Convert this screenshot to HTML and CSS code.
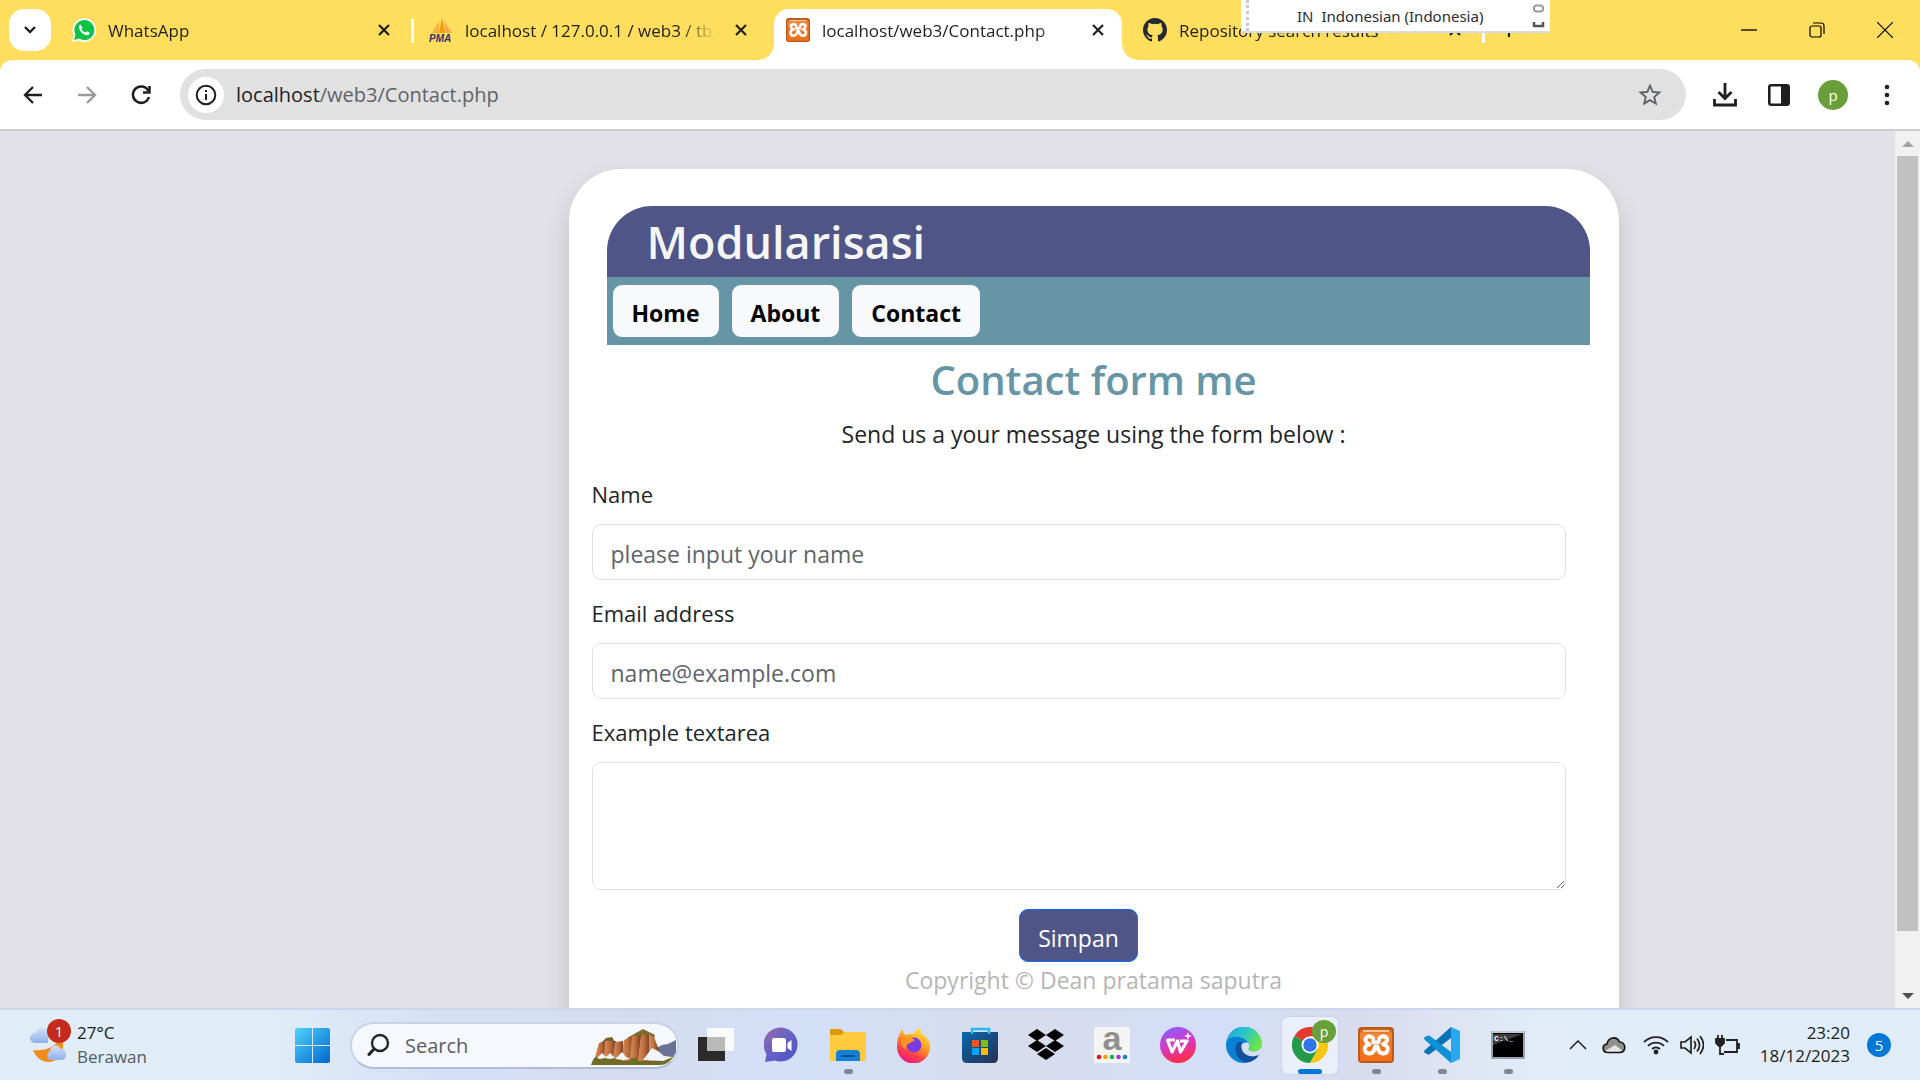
FILE: index.html
```html
<!DOCTYPE html>
<html lang="en">
<head>
<meta charset="utf-8">
<title>localhost/web3/Contact.php</title>
<link rel="stylesheet" href="styles.css">
</head>
<body>
<svg class="defs" aria-hidden="true">
  <symbol id="close" viewBox="0 0 14 14"><path d="M2 2l10 10M12 2L2 12" stroke="#1f1f1f" stroke-width="2.2"/></symbol>
  <linearGradient id="xg" x1="0" y1="0" x2="0" y2="1"><stop offset="0" stop-color="#c25a14"/><stop offset=".2" stop-color="#f58a3a"/><stop offset=".4" stop-color="#f37321"/><stop offset="1" stop-color="#f0701c"/></linearGradient>
  <symbol id="xampp" viewBox="0 0 36 36"><rect x="1" y="1" width="34" height="34" rx="3" fill="url(#xg)" stroke="#b9591a" stroke-width="2"/><path d="M5 4h26" stroke="#f9c09a" stroke-width="2"/><path d="M14.500 10.500c-4-3-8.500.5-6.500 4 1 1.500 2 2 3.500 2.800-4 1-5.500 3.200-4.500 6.200 1.500 4 7 4 9 0l1-3.500h2.500l1 3.500c2 4 7.500 4 9 0 1-3-.5-5.200-4.500-6.200 1.500-.8 2.500-1.300 3.500-2.800 2-3.500-2.500-7-6.500-4-1.500 1.200-1 3-1.500 5h-5c-.5-2 .5-3.800-1-5z" fill="none" stroke="#fff" stroke-width="4" stroke-linejoin="round"/></symbol>
</svg>

<header class="browser">
  <div class="tabstrip">
    <button class="tab-search" aria-label="Search tabs"><svg width="14" height="10" viewBox="0 0 14 10"><path d="M2 2l5 5 5-5" fill="none" stroke="#1f1f1f" stroke-width="2.400"/></svg></button>
    <div class="tab tab-sep">
      <svg class="favicon" viewBox="0 0 24 24"><path d="M0 24l1.800-6.300A11.900 11.900 0 1 1 6.500 22.500z" fill="#fff"/><path d="M2 22l1.500-5.300A10 10 0 1 1 7.200 20.600z" fill="#0bc344"/><path d="M8.300 6.500c-1 .3-1.700 1.500-1.500 2.800.7 4 4 7.300 8 8 1.600.2 3-1 3-2.500l-2.800-1.500-1.500 1.300c-1.800-.7-3.200-2-4-3.900l1.100-1.300z" fill="#fff"/></svg>
      <span class="tab-title">WhatsApp</span>
      <button class="tab-close" aria-label="Close tab"><svg width="14" height="14"><use href="#close"/></svg></button>
    </div>
    <div class="tab">
      <svg class="favicon" viewBox="0 0 24 24"><path d="M3 15L10 3v12z" fill="#ffb13b"/><path d="M10 15L13 0l3 15z" fill="#f89c0e"/><path d="M16 15l-1-12 8 12z" fill="#f9a94a"/><text x="0" y="23.500" class="pma">PMA</text></svg>
      <span class="tab-title">localhost / 127.0.0.1 / web3 / tb_user</span>
      <button class="tab-close" aria-label="Close tab"><svg width="14" height="14"><use href="#close"/></svg></button>
    </div>
    <div class="tab tab-active">
      <svg class="favicon"><use href="#xampp"/></svg>
      <span class="tab-title">localhost/web3/Contact.php</span>
      <button class="tab-close" aria-label="Close tab"><svg width="14" height="14"><use href="#close"/></svg></button>
    </div>
    <div class="tab tab-sep">
      <svg class="favicon" viewBox="0 0 16 16"><path fill="#24292f" d="M8 0C3.580 0 0 3.580 0 8c0 3.540 2.290 6.530 5.470 7.590.4.070.55-.17.55-.38 0-.19-.01-.82-.01-1.490-2.010.37-2.530-.49-2.690-.94-.09-.23-.48-.94-.82-1.130-.28-.15-.68-.52-.01-.53.63-.01 1.080.58 1.230.82.72 1.210 1.870.87 2.330.66.07-.52.28-.87.51-1.070-1.780-.2-3.640-.89-3.640-3.950 0-.87.31-1.590.82-2.150-.08-.2-.36-1.020.08-2.120 0 0 .67-.21 2.200.82a7.600 7.600 0 0 1 4 0c1.530-1.040 2.200-.82 2.200-.82.44 1.100.16 1.920.08 2.120.51.56.82 1.270.82 2.150 0 3.070-1.870 3.750-3.650 3.950.29.25.54.73.54 1.480 0 1.070-.01 1.930-.01 2.200 0 .21.15.46.55.38A8 8 0 0 0 16 8c0-4.420-3.580-8-8-8z"/></svg>
      <span class="tab-title">Repository search results</span>
      <button class="tab-close" aria-label="Close tab"><svg width="14" height="14"><use href="#close"/></svg></button>
    </div>
    <button class="new-tab" aria-label="New tab"><svg width="16" height="16"><path d="M8 1v14M1 8h14" stroke="#1f1f1f" stroke-width="2.200"/></svg></button>
    <div class="window-controls">
      <button aria-label="Minimize"><svg width="16" height="16"><path d="M0 8h16" stroke="#000" stroke-width="1.300"/></svg></button>
      <button aria-label="Restore"><svg width="16" height="16" fill="none" stroke="#000" stroke-width="1.200"><rect x="1" y="4" width="11" height="11" rx="2"/><path d="M4 1h8a3 3 0 0 1 3 3v8"/></svg></button>
      <button aria-label="Close window"><svg width="16" height="16"><path d="M0 0l16 16M16 0L0 16" stroke="#000" stroke-width="1.200"/></svg></button>
    </div>
    <div class="langbar">
      <span class="grip"></span><span class="lang-code">IN</span><span class="lang-name">Indonesian (Indonesia)</span>
      <svg width="14" height="30" fill="none"><path d="M2 7.500V6l2-1.500h5L11 6v3l-2 1.500H4L2 9z" stroke="#999" stroke-width="2"/><path d="M2 21v4h9v-4" stroke="#555" stroke-width="2.500"/></svg>
    </div>
  </div>

  <div class="toolbar">
    <div class="nav-buttons">
      <button aria-label="Back"><svg width="20" height="20" fill="none" stroke="#1f1f1f" stroke-width="2.300"><path d="M19 10H2M10 2l-8 8 8 8"/></svg></button>
      <button aria-label="Forward"><svg width="20" height="20" fill="none" stroke="#9a9a9a" stroke-width="2.300"><path d="M1 10h17M10 2l8 8-8 8"/></svg></button>
      <button aria-label="Reload"><svg width="20" height="20" fill="none" stroke="#1f1f1f" stroke-width="2.500"><path d="M17.500 6A8.200 8.200 0 1 0 18 12"/><path d="M18.500 1v6.500H12"/></svg></button>
    </div>
    <div class="omnibox">
      <button class="site-info" aria-label="Site information"><svg width="22" height="22" fill="none" stroke="#1f1f1f" stroke-width="2"><circle cx="11" cy="11" r="9.300"/><path d="M11 10v6M11 6v2"/></svg></button>
      <span class="url">localhost<span class="url-path">/web3/Contact.php</span></span>
      <button class="star" aria-label="Bookmark"><svg width="28" height="28" viewBox="0 0 24 24"><path fill="#5f6368" d="M22 9.240l-7.190-.62L12 2 9.190 8.630 2 9.240l5.460 4.730L5.820 21 12 17.270 18.180 21l-1.630-7.030L22 9.240zM12 15.400l-3.760 2.270 1-4.280-3.320-2.880 4.380-.38L12 6.100l1.710 4.040 4.380.38-3.320 2.880 1 4.280L12 15.400z"/></svg></button>
    </div>
    <div class="actions">
      <button aria-label="Downloads"><svg width="24" height="24" fill="none" stroke="#1f1f1f" stroke-width="2.800"><path d="M12 0v15M5.500 9l6.500 6.500L18.500 9M1.500 16v6h21v-6"/></svg></button>
      <button aria-label="Side panel"><svg width="22" height="22"><rect x="1.300" y="1.300" width="19.400" height="19.400" rx="2" fill="none" stroke="#1f1f1f" stroke-width="2.600"/><path d="M13 1h8v20h-8z" fill="#1f1f1f"/></svg></button>
      <button class="avatar">p</button>
      <button aria-label="Menu"><svg width="6" height="22" fill="#1f1f1f"><circle cx="3" cy="3" r="2.300"/><circle cx="3" cy="11" r="2.300"/><circle cx="3" cy="19" r="2.300"/></svg></button>
    </div>
  </div>
</header>

<div class="viewport">
  <main class="page">
    <div class="card">
      <div class="banner"><h1>Modularisasi</h1></div>
      <nav class="menu"><a href="#home">Home</a><a href="#about">About</a><a href="#contact">Contact</a></nav>
      <h2>Contact form me</h2>
      <p class="lead">Send us a your message using the form below :</p>
      <form>
        <label for="name">Name</label>
        <input id="name" type="text" placeholder="please input your name">
        <label for="email">Email address</label>
        <input id="email" type="email" placeholder="name@example.com">
        <label for="message">Example textarea</label>
        <textarea id="message"></textarea>
        <button type="submit">Simpan</button>
      </form>
      <footer>Copyright © Dean pratama saputra</footer>
    </div>
  </main>
  <div class="scrollbar" aria-hidden="true">
    <svg width="12" height="8"><path d="M0 7l6-6 6 6z" fill="#a3a3a3"/></svg>
    <div class="track"><div class="thumb"></div></div>
    <svg width="12" height="8"><path d="M0 1l6 6 6-6z" fill="#505050"/></svg>
  </div>
</div>

<div class="taskbar">
  <button class="weather">
    <span class="weather-icon">
      <svg width="38" height="42" viewBox="0 0 38 42"><defs><linearGradient id="cl" x1="0" y1="0" x2="0" y2="1"><stop offset="0" stop-color="#d3e1fb"/><stop offset="1" stop-color="#8fb0ea"/></linearGradient></defs><path d="M5 16a5 5 0 0 1 0-10 7 7 0 0 1 13-1v11z" fill="url(#cl)" transform="translate(0 3)"/><path d="M3 26c14 2 24-5 28-13 6 12-2 25-12 25-7 0-13-4-16-12z" fill="#f28a1e"/><path d="M20 36a5 5 0 0 1 0-9c1-7 9-7 11-2 6-1 7 10 1 11z" fill="url(#cl)"/></svg>
      <span class="alert">1</span>
    </span>
    <span class="weather-text"><span>27°C</span><span class="muted">Berawan</span></span>
  </button>

  <div class="apps">
    <button class="start" aria-label="Start"><svg width="35" height="35" viewBox="0 0 35 35"><defs><linearGradient id="win" x1="0" y1="0" x2="1" y2="1"><stop offset="0" stop-color="#4fd3fb"/><stop offset="1" stop-color="#0067cf"/></linearGradient></defs><path d="M1.500 0H17v17H0V1.500zM18 0h15.500L35 1.500V17H18zM0 18h17v17H1.500L0 33.500zM18 18h17v15.500L33.500 35H18z" fill="url(#win)"/></svg></button>
    <label class="search">
      <svg width="24" height="24" fill="none" stroke="#222" stroke-width="2.300" stroke-linecap="round"><circle cx="13" cy="10" r="8"/><path d="M7 16l-5 5.500" stroke-width="3"/></svg>
      <input type="text" placeholder="Search" aria-label="Search">
      <svg class="scene" width="86" height="38" viewBox="0 0 86 38"><defs><linearGradient id="rock" x1="0" y1="0" x2="1" y2="0"><stop offset="0" stop-color="#dc8f58"/><stop offset=".55" stop-color="#b8693a"/><stop offset="1" stop-color="#6e3b22"/></linearGradient></defs><path d="M62 21l9-5 6-1 8-4v14l-6 5H62z" fill="#6a7196"/><path d="M0 36c2-6 3-8 7-9h76c-3 5-8 9-14 9z" fill="#6f6c28"/><path d="M10 14l5-5 6-1 3 5z" fill="#75652c"/><path d="M36 9L52 0l12 6-2 6H36z" fill="#7d6a2e"/><g fill="url(#rock)"><path d="M8 14l6-2 1 16H4z"/><path d="M14 12h11l-2 16H13z"/><path d="M24 13l8-1 1 17H22z"/><path d="M33 11l6-3 4 0-4 24h-8z"/><path d="M41 7l9-1-2 23H39z"/><path d="M50 6l8 0 1 26H47z"/><path d="M58 6l5 2 5 13-1 11h-9z"/></g><path d="M6 29l5-5 4 4 4-4 5 5-5 1-5-1-5 1zM24 30l7-7 4 5 5 2-8 1z" fill="#f4f5fa"/><path d="M52 31l9-12 6 3 6 5 9 1-10 4z" fill="#f2f4fb"/></svg>
    </label>
    <button class="app" aria-label="Task view"><svg width="36" height="36" viewBox="0 0 36 36"><path d="M0 10h27v24H0z" fill="#2b2b2b"/><path d="M9 1h27v23H9z" fill="#fafafa"/><path d="M9 10h18v14H9z" fill="#b9b9b9"/></svg></button>
    <button class="app" aria-label="Chat"><svg width="36" height="36" viewBox="0 0 36 36"><defs><linearGradient id="ch" x1="0" y1="0" x2="1" y2="1"><stop offset="0" stop-color="#9b68a8"/><stop offset=".45" stop-color="#6a63c4"/><stop offset="1" stop-color="#4b50c8"/></linearGradient></defs><path d="M1 35l1.500-8A17 17 0 1 1 11 33.500z" fill="url(#ch)"/><rect x="8" y="11" width="14" height="14" rx="2" fill="#fff"/><path d="M23.500 16l4-3v11l-4-3z" fill="#fff"/></svg></button>
    <button class="app running" aria-label="File Explorer"><svg width="36" height="36" viewBox="0 0 36 36"><path d="M0 3q0-1 1-1h10l4 4v8H0z" fill="#dc9c0a"/><path d="M0 8h11l4-3h21v29H0z" fill="#ffcb3e"/><path d="M6 34V27q0-4 4-4h16q4 0 4 4v7z" fill="#1280d4"/><path d="M11 29h14" stroke="#0a4f94" stroke-width="2"/></svg></button>
    <button class="app" aria-label="Firefox"><svg width="36" height="36" viewBox="0 0 36 36"><defs><linearGradient id="ff" x1=".8" y1="0" x2=".3" y2="1"><stop offset="0" stop-color="#fff04a"/><stop offset=".45" stop-color="#ff9a20"/><stop offset=".75" stop-color="#ff3d4a"/><stop offset="1" stop-color="#e8188a"/></linearGradient></defs><path d="M2 11l4-9 2 5 3 1q3-2 6-1l6-7 3 7c5 3 8 7 8 13a16.500 16.500 0 0 1-33 0q0-5 1-9z" fill="url(#ff)"/><circle cx="18" cy="18" r="7.500" fill="#7a3ce0"/><path d="M5 13c6-5 11-2 14 0l-5 3c-3 1-5 4-3 7-5-2-6-6-6-10z" fill="#ff9328"/></svg></button>
    <button class="app" aria-label="Microsoft Store"><svg width="36" height="36" viewBox="0 0 36 36"><defs><linearGradient id="st" x1="0" y1="0" x2="1" y2="1"><stop offset="0" stop-color="#0b66ae"/><stop offset="1" stop-color="#243253"/></linearGradient></defs><path d="M0 5h36v26q0 5-5 5H5q-5 0-5-5z" fill="url(#st)"/><path d="M10 7V2h17v5" fill="none" stroke="#25b8f2" stroke-width="2.500"/><path d="M10 13h7v7h-7z" fill="#f35325"/><path d="M19 13h7v7h-7z" fill="#81bc06"/><path d="M10 21h7v7h-7z" fill="#05a6f0"/><path d="M19 21h7v7h-7z" fill="#ffba08"/></svg></button>
    <button class="app" aria-label="Dropbox"><svg width="36" height="36" viewBox="0 0 36 36"><path d="M9 2l9 6-9 6-9-6zM27 2l9 6-9 6-9-6zM9 13l9 6-9 6-9-6zM27 13l9 6-9 6-9-6zM18 21l9 6-9 6-9-6z"/></svg></button>
    <button class="app" aria-label="Alexa shopping"><svg width="36" height="36" viewBox="0 0 36 36"><path d="M0 0h36v36H0z" fill="#f4f4f3"/><text x="18" y="23" text-anchor="middle" class="letter-a">a</text><circle cx="5" cy="30" r="2.300" fill="#e8121c"/><circle cx="11.500" cy="30" r="2.300" fill="#f79a16"/><circle cx="18" cy="30" r="2.300" fill="#20b04c"/><circle cx="24.500" cy="30" r="2.300" fill="#9b3fd0"/><circle cx="31" cy="30" r="2.300" fill="#0d83dd"/></svg></button>
    <button class="app" aria-label="WPS Office"><svg width="36" height="36" viewBox="0 0 36 36"><defs><linearGradient id="wp" x1=".3" y1="0" x2=".6" y2="1"><stop offset="0" stop-color="#8c5cff"/><stop offset=".5" stop-color="#d937c0"/><stop offset="1" stop-color="#ff2c3c"/></linearGradient></defs><circle cx="18" cy="18" r="18" fill="url(#wp)"/><path d="M15 13H7.500L12 25l5.500-11 3 11L27 14h-7" fill="none" stroke="#fff" stroke-width="3.200" stroke-linejoin="round"/><path d="M28 5l1 3 3 1-3 1-1 3-1-3-3-1 3-1z" fill="#fff"/></svg></button>
    <button class="app" aria-label="Edge"><svg width="36" height="36" viewBox="0 0 36 36"><defs><linearGradient id="eg" x1="0" y1="0" x2="1" y2=".5"><stop offset="0" stop-color="#1e9de0"/><stop offset=".5" stop-color="#2cc4cf"/><stop offset="1" stop-color="#69e44b"/></linearGradient></defs><path d="M0 18A18 18 0 0 1 36 17c0 5-4 7.500-8.500 7.500-5 0-6-2-4.500-4 2-5-5-9-11-7S3 18 0 18z" fill="url(#eg)"/><path d="M0 18c0-6 6-9 12-8 5 .5 9 3 10 6-5-2-9 3-7 8s9 8 17 4c-3 5-8 8-14 8A18 18 0 0 1 0 18z" fill="#0a80d6"/><path d="M12 15c-5 5-3 16 6 20 6 1 12-2 15-7-6 3-13 1-16-3-2-3-2-7-1-10z" fill="#124f9d"/></svg></button>
    <button class="app running current" aria-label="Chrome"><svg width="36" height="36" viewBox="0 0 36 36"><path d="M18 18L2.400 9A18 18 0 0 1 33.600 9z" fill="#e33b2e"/><path d="M18 18L2.400 9A18 18 0 0 0 18 36l8-14z" fill="#229a48"/><path d="M18 18l8 4-8 14A18 18 0 0 0 33.600 9H18z" fill="#fdc613"/><circle cx="18" cy="18" r="8.500" fill="#fff"/><circle cx="18" cy="18" r="6.700" fill="#2f74e8"/></svg><span class="app-avatar">p</span></button>
    <button class="app running" aria-label="XAMPP"><svg width="36" height="36"><use href="#xampp"/></svg></button>
    <button class="app running" aria-label="Visual Studio Code"><svg width="36" height="36" viewBox="0 0 36 36"><path d="M27 0L1 23q-2 2 0 3l2 1q1 1 3 0L27 11z" fill="#0a73b8"/><path d="M27 36L1 13q-2-2 0-3l2-1q1-1 3 0l21 16z" fill="#0f8fd6"/><path d="M27 0l9 4v28l-9 4z" fill="#27a8f0"/></svg></button>
    <button class="app running" aria-label="Command Prompt"><svg width="36" height="36" viewBox="0 0 36 36"><rect x="2" y="5" width="32" height="26" fill="#000" stroke="#9aa3ab" stroke-width="2"/><path d="M2 5h32" stroke="#c3cad0" stroke-width="2"/><path d="M3 7h30L3 18z" fill="#3c3c3c"/><text x="4" y="14" class="prompt">C:\_</text></svg></button>
  </div>

  <div class="tray">
    <button class="tray-icon" aria-label="Show hidden icons"><svg width="18" height="10"><path d="M1 9l8-8 8 8" fill="none" stroke="#222" stroke-width="1.500"/></svg></button>
    <button class="tray-icon" aria-label="OneDrive"><svg width="24" height="18" viewBox="0 0 24 18"><path d="M6 16.500C0 16.500-.5 9 5 8 6 1 15-.5 17.500 6c6.500 0 7.500 10.500 0 10.500z" fill="#8f8f8f"/><path d="M3 15l10-6 8 6-2 1H5z" fill="#e4e4e4"/><path d="M6 16.500C0 16.500-.5 9 5 8 6 1 15-.5 17.500 6c6.500 0 7.500 10.500 0 10.500z" fill="none" stroke="#111" stroke-width="1.600"/></svg></button>
    <button class="tray-icon wifi" aria-label="Wi-Fi"><svg width="26" height="20" fill="none" stroke="#222" stroke-width="1.800"><path d="M1 7a17 17 0 0 1 24 0M5 11a11 11 0 0 1 16 0M9 14a6 6 0 0 1 8 0"/><circle cx="13" cy="17" r="1.500" fill="#222"/></svg></button>
    <button class="tray-icon" aria-label="Volume"><svg width="24" height="20" fill="none" stroke="#222" stroke-width="1.700"><path d="M1 7h4l6-5v16l-6-5H1zM14 6q3 4 0 8M17 3.500q5 6.500 0 13M20 1q7 9 0 18"/></svg></button>
    <button class="tray-icon" aria-label="Battery"><svg width="26" height="20" fill="none" stroke="#222" stroke-width="1.800"><path d="M11 5h11v12H9M5 11v8h4"/><path d="M1 4h8v4l-3 3H4L1 8zM3 4V0M7 4V0M22 9h2v4h-2" fill="#222"/></svg></button>
    <button class="clock"><span>23:20</span><span>18/12/2023</span></button>
    <span class="count">5</span>
  </div>
</div>
</body>
</html>
```
FILE: styles.css
```css
* { box-sizing: border-box; }

body {
  margin: 0;
  height: 100vh;
  display: flex;
  flex-direction: column;
  overflow: hidden;
  font-family: "Open Sans", "Noto Sans", sans-serif;
  color: #212529;
}

button {
  border: 0;
  padding: 0;
  background: none;
  font: inherit;
  color: inherit;
  display: flex;
  align-items: center;
  justify-content: center;
}

svg { display: block; flex: none; }
.defs { position: absolute; width: 0; height: 0; }

/* Tab strip */
.browser { background: #ffdd5d; }

.tabstrip {
  position: relative;
  display: flex;
  gap: 9px;
  height: 60px;
  padding: 9px 0 0 9px;
}

.tab-search { width: 42px; height: 42px; border-radius: 15px; background: #fff; }

.tab {
  position: relative;
  display: flex;
  align-items: center;
  gap: 12px;
  flex: 0 1 348px;
  min-width: 0;
  height: 51px;
  padding: 0 17px 9px 12px;
}

.tab-sep::after {
  content: "";
  position: absolute;
  right: -6px;
  top: 10px;
  width: 3px;
  height: 24px;
  background: #fff;
}

.tab-active { background: #fff; border-radius: 15px 15px 0 0; }

.tab-active::before,
.tab-active::after {
  content: "";
  position: absolute;
  bottom: 0;
  width: 15px;
  height: 15px;
}
.tab-active::before { left: -15px; background: radial-gradient(circle at 0 0, transparent 14px, #fff 15px); }
.tab-active::after { right: -15px; background: radial-gradient(circle at 100% 0, transparent 14px, #fff 15px); }

.favicon { width: 24px; height: 24px; }
.pma { font: italic bold 10px "Liberation Sans", sans-serif; fill: #2d2f6c; }

.tab-title {
  flex: 1;
  padding-top: 2px;
  overflow: hidden;
  white-space: nowrap;
  font-size: 17px;
  line-height: 24px;
  color: #1f1f1f;
  -webkit-mask-image: linear-gradient(to right, #000 calc(100% - 36px), transparent);
  mask-image: linear-gradient(to right, #000 calc(100% - 36px), transparent);
}
.tab-close { margin-left: 6px; }
.new-tab { height: 42px; margin-left: 13px; }

.window-controls { display: flex; gap: 52px; height: 42px; margin-left: auto; padding-right: 27px; }

/* Input-language bar floating over the window */
.langbar {
  position: absolute;
  left: 1241px;
  top: 0;
  display: flex;
  align-items: center;
  gap: 8px;
  width: 309px;
  height: 33px;
  padding-right: 4px;
  background: #fff;
  border-bottom: 2px solid #d9dbe2;
  font-family: "Noto Sans", sans-serif;
  font-size: 15px;
  color: #2b2b35;
}
.grip { align-self: stretch; width: 8px; margin-right: 40px; border-right: 3px dotted #c9c9c9; }
.lang-name { flex: 1; white-space: nowrap; }

/* Toolbar */
.toolbar {
  display: flex;
  align-items: center;
  height: 71px;
  padding: 0 30px 0 23px;
  background: #fff;
  border-bottom: 2px solid #cdcdd0;
  border-radius: 12px 12px 0 0;
}
.nav-buttons { display: flex; gap: 34px; padding-right: 29px; }

.omnibox {
  flex: 1;
  display: flex;
  align-items: center;
  height: 51px;
  padding: 0 22px 0 8px;
  border-radius: 26px;
  background: #e1e1e1;
  font-size: 20px;
}
.site-info { width: 36px; height: 36px; border-radius: 50%; background: #fff; }
.url { flex: 1; padding-left: 12px; color: #1f1f1f; }
.url-path { color: #5f6368; }

.actions { display: flex; align-items: center; gap: 31px; padding-left: 27px; }
.actions .avatar {
  width: 30px;
  height: 30px;
  margin: 0 5px 0 -3px;
  border-radius: 50%;
  background: #689f38;
  color: #fff;
  font-size: 15px;
  line-height: 26px;
}

/* Page */
.viewport { flex: 1; min-height: 0; display: flex; background: #e2e1e7; }
.page { flex: 1; min-width: 0; overflow: hidden; padding-top: 38px; }

.card {
  max-width: 1050px;
  min-height: 900px;
  margin-left: 30%;
  padding-top: 37px;
  border-radius: 52px;
  background: #fff;
  box-shadow: 0 12px 24px rgba(0, 0, 0, .15);
  font-size: 23px;
  line-height: 35px;
}

.banner {
  margin: 0 29px 0 38px;
  padding: 0 40px;
  border-radius: 45px 45px 0 0;
  background: #4f5586;
}
h1 { margin: 0; font-size: 45px; line-height: 71px; font-weight: 600; color: #f5f5f5; }

.menu {
  display: flex;
  gap: 13px;
  margin: 0 29px 0 38px;
  padding: 8px 6px;
  background: #6696a6;
}
.menu a {
  padding: 11px 19px 6px;
  border-radius: 9px;
  background: #f8f9fa;
  color: #000;
  font-weight: 700;
  text-decoration: none;
}

h2 {
  margin: 7px 0 9px;
  font-size: 40px;
  line-height: 56px;
  font-weight: 600;
  text-align: center;
  color: #6696a6;
}
.lead { margin: 0; text-align: center; }

form { display: flex; flex-direction: column; margin: 25px 53px 0 23px; }
form label { margin-bottom: 12px; font-size: 22px; }

form input,
form textarea {
  width: 100%;
  height: 56px;
  margin: 0 0 16px;
  padding: 3px 18px 0;
  border: 1px solid #dee2e6;
  border-radius: 9px;
  background: #fff;
  font: inherit;
  outline: 0;
}
form textarea { height: 128px; resize: vertical; }
form input::placeholder { color: #5f656b; opacity: 1; }

form button {
  align-self: center;
  height: 53px;
  margin-top: 3px;
  padding: 5px 18px 0;
  border: 1px solid #0d6efd;
  border-radius: 9px;
  background: #4f5586;
  color: #fff;
}
footer { padding-top: 1px; text-align: center; color: #b6b6b6; }

.scrollbar {
  display: flex;
  flex-direction: column;
  align-items: center;
  gap: 8px;
  width: 25px;
  padding: 9px 0 8px;
  background: #f1f1f1;
}
.track { flex: 1; align-self: stretch; padding: 0 2px; }
.thumb { height: calc(100% - 53px); background: #c1c1c1; }

/* Taskbar */
.taskbar {
  display: flex;
  align-items: center;
  height: 72px;
  padding: 0 29px 0 30px;
  border-top: 2px solid #cbd6ea;
  background: linear-gradient(90deg, #e0edf7 0 14%, #d5e0f7 23%, #d6dcf0 33%, #d2e0f8 42%, #d8dced 53%, #d3dff8 63%, #d9dcee 71%, #e1ecf7 80%, #e0edf8);
}

.weather { width: 249px; justify-content: flex-start; gap: 9px; }
.weather-icon { position: relative; }
.alert {
  position: absolute;
  top: -5px;
  left: 17px;
  width: 24px;
  border-radius: 50%;
  background: #c42b1c;
  color: #fff;
  font-size: 15px;
  line-height: 24px;
}
.weather-text { display: flex; flex-direction: column; text-align: left; font-size: 17px; line-height: 24px; color: #1b1b1b; }
.muted { color: #555b61; }

.apps { display: flex; align-items: center; }
.start { width: 66px; }

.search {
  display: flex;
  align-items: center;
  width: 329px;
  height: 47px;
  margin: 0 4px 0 5px;
  padding-left: 15px;
  overflow: hidden;
  border: 2px solid #c9d3e8;
  border-bottom-color: #b0bdd4;
  border-radius: 24px;
  background: #f5f8fd;
}
.search input {
  flex: 1;
  min-width: 0;
  padding: 0 0 0 14px;
  border: 0;
  outline: 0;
  background: none;
  font: 20px "Open Sans", sans-serif;
}
.search input::placeholder { color: #5d5d5d; opacity: 1; }
.scene { align-self: flex-end; }

.app {
  position: relative;
  width: 56px;
  height: 57px;
  margin: 0 5px;
  border-radius: 6px;
}
.running::after {
  content: "";
  position: absolute;
  bottom: 0;
  left: 50%;
  width: 9px;
  height: 5px;
  margin-left: -4px;
  border-radius: 3px;
  background: #82868f;
}
.current { background: #eaeff9; box-shadow: 0 0 2px #b9c3d6; }
.current::after { width: 24px; margin-left: -12px; background: #0078d7; }
.app-avatar {
  position: absolute;
  top: 3px;
  right: 2px;
  width: 24px;
  border-radius: 50%;
  background: #689f38;
  color: #fff;
  font-size: 14px;
  line-height: 23px;
}
.letter-a { font: bold 34px "Liberation Sans", sans-serif; fill: #909090; }
.prompt { font: bold 8px "Liberation Mono", monospace; fill: #fff; }

.tray { display: flex; align-items: center; margin-left: auto; color: #1b1b1b; }
.tray-icon { width: 36px; }
.wifi { margin-left: 6px; }
.clock { flex-direction: column; align-items: flex-end; width: 104px; padding-bottom: 2px; font-size: 17px; line-height: 23px; }
.count {
  width: 24px;
  margin-left: 17px;
  border-radius: 50%;
  background: #0078d7;
  color: #fff;
  font-size: 15px;
  line-height: 24px;
  text-align: center;
}
```
